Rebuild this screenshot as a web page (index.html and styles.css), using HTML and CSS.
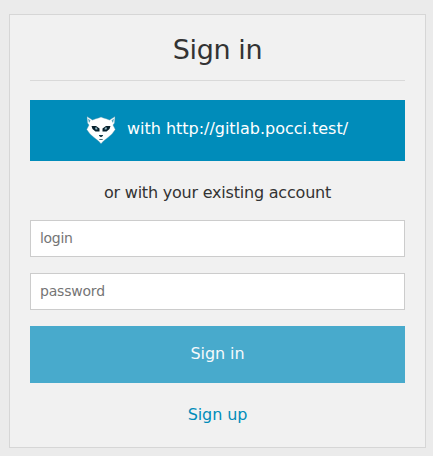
FILE: index.html
```html
<!DOCTYPE html>
<html lang="en">
<head>
<meta charset="utf-8">
<title>Sign in</title>
<link rel="stylesheet" href="styles.css">
</head>
<body>
<main class="card">
  <h1 class="title">Sign in</h1>
  <a class="oauth" href="#">
    <svg class="fox" viewBox="0 0 30 28" width="30" height="28" aria-hidden="true">
      <path fill="#fff" stroke="#4c93aa" stroke-width=".4" d="M1 .5 L6.500 4 Q10 2.500 12.500 2 L15 1 L17.500 2 Q20 2.500 23.500 4 L29 .5 L28.500 7 L27 9 L29.300 13.500 L26 18 L22 21.500 L17.500 25 L15 27.700 L12.500 25 L8 21.500 L4 18 L.7 13.500 L3 9 L1.500 7Z"/>
      <path fill="#5aa5bd" d="M2 2.500 L4.500 4.500 L3 7Z M28 2.500 L25.500 4.500 L27 7Z"/>
      <path fill="#06202c" d="M5.500 10 L10 10 L13.500 12.500 L13.500 15.500 L9.500 15.500 L6.500 13Z M24.500 10 L20 10 L16.500 12.500 L16.500 15.500 L20.500 15.500 L23.500 13Z"/>
      <path fill="#8fb7c5" d="M9 11.500 L11 11.500 L11.500 13.500 L9.500 13.500Z M21 11.500 L19 11.500 L18.500 13.500 L20.500 13.500Z"/>
      <path fill="#173b49" d="M13 19 H17 V19.800 L15.500 21 H14.500 L13 19.800Z M13.300 23 H16.700 V23.800 H13.300Z"/>
    </svg>
    <span class="oauth-text">with http://gitlab.pocci.test/</span>
  </a>
  <p class="hint"><span class="hint-text">or with your existing account</span></p>
  <form class="form">
    <input class="field" type="text" placeholder="login">
    <input class="field password" type="password" placeholder="password">
    <button class="submit" type="button">Sign in</button>
  </form>
  <a class="signup" href="#">Sign up</a>
</main>
</body>
</html>
```

FILE: styles.css
```css
* { box-sizing: border-box; }
body {
  margin: 0;
  padding: 14px 7px 8px 9px;
  background: #ebebeb;
  color: #333;
  font: 16px/24px "DejaVu Sans", sans-serif;
}
.card {
  height: 434px;
  padding: 0 20px;
  border: 1px solid #d6d6d6;
  background: #f1f1f1;
  display: flex;
  flex-direction: column;
}
.title {
  height: 66px;
  margin: 0 0 19px;
  padding-top: 16px;
  border-bottom: 1px solid #d9d9d9;
  font-size: 27px;
  line-height: 38px;
  font-weight: 400;
  text-align: center;
  letter-spacing: -.4px;
}
.oauth {
  height: 61px;
  padding: 0 0 4px 56px;
  display: flex;
  align-items: center;
  gap: 11px;
  background: #008cba;
  color: #fff;
  text-decoration: none;
  white-space: nowrap;
}
.fox { margin-top: 3px; }
.oauth-text { letter-spacing: -.02px; }
.hint {
  margin: 20px 0 15px;
  text-align: center;
  letter-spacing: -.21px;
  white-space: nowrap;
}
.form {
  display: flex;
  flex-direction: column;
  gap: 16px;
}
.field {
  height: 37px;
  margin: 0;
  padding: 0 9px 2px;
  border: 1px solid #ccc;
  border-radius: 0;
  background: #fff;
  font: 14px "DejaVu Sans", sans-serif;
  letter-spacing: -.3px;
}
.password { letter-spacing: -.2px; }
.field::placeholder { color: #757575; opacity: 1; }
.submit {
  height: 57px;
  padding: 0 0 3px;
  border: 0;
  background: #48aacc;
  color: #f5f9fb;
  font: 16px "DejaVu Sans", sans-serif;
  letter-spacing: -.1px;
}
.signup {
  margin-top: 20px;
  color: #008cba;
  text-align: center;
  text-decoration: none;
  letter-spacing: -.1px;
}
```
